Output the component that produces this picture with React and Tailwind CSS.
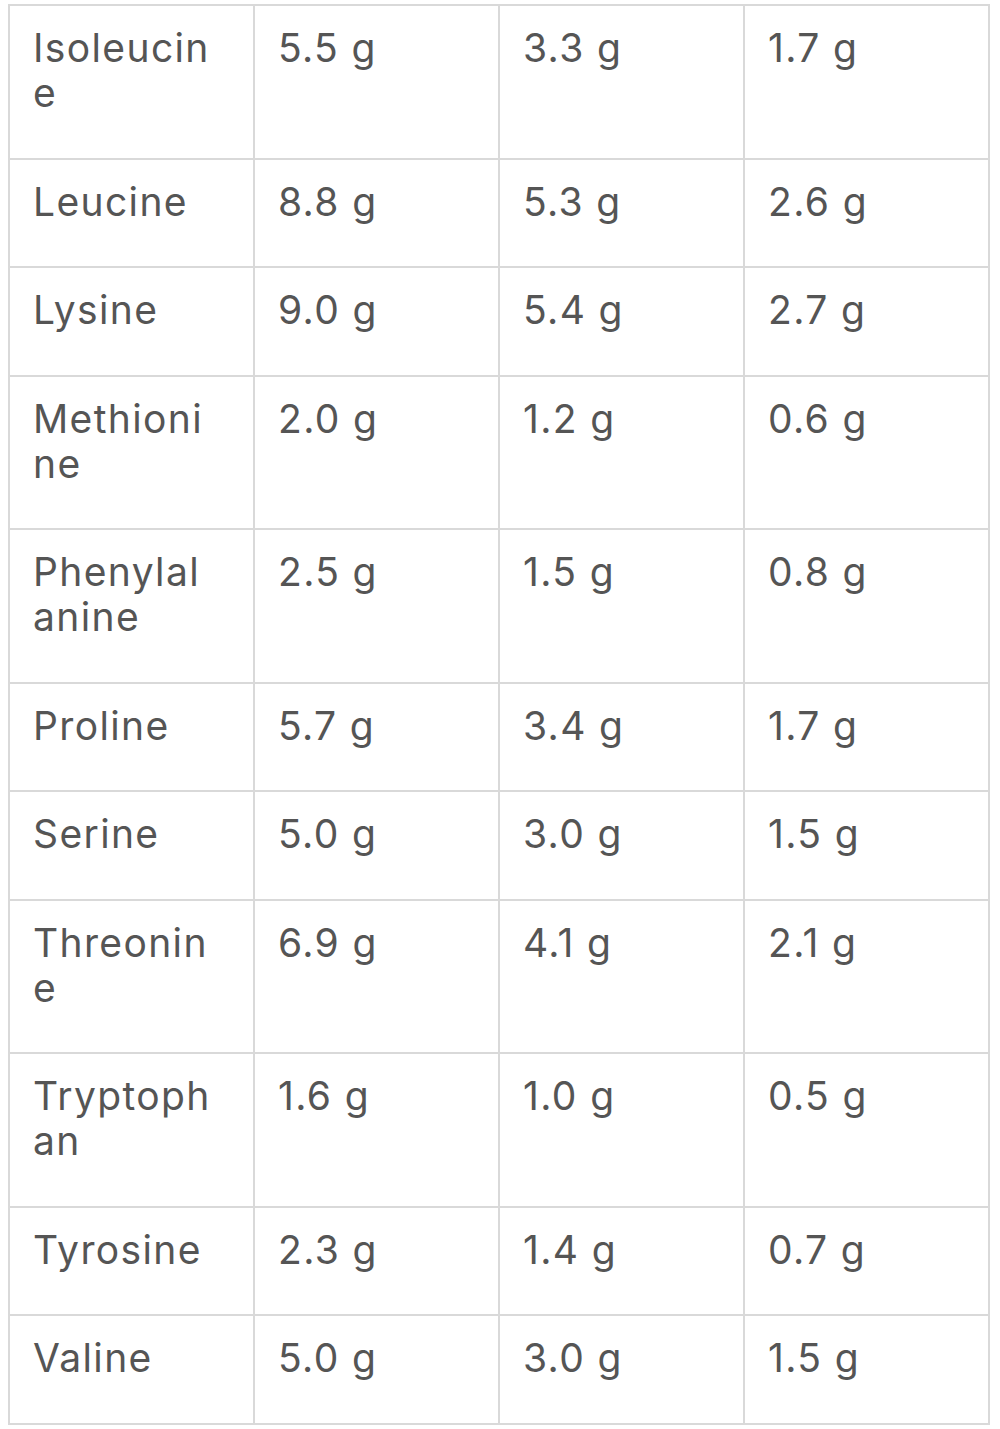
import React from 'react';

const rows = [
  { name: ['Isoleucin', 'e'], values: ['5.5 g', '3.3 g', '1.7 g'] },
  { name: ['Leucine'], values: ['8.8 g', '5.3 g', '2.6 g'] },
  { name: ['Lysine'], values: ['9.0 g', '5.4 g', '2.7 g'] },
  { name: ['Methioni', 'ne'], values: ['2.0 g', '1.2 g', '0.6 g'] },
  { name: ['Phenylal', 'anine'], values: ['2.5 g', '1.5 g', '0.8 g'] },
  { name: ['Proline'], values: ['5.7 g', '3.4 g', '1.7 g'] },
  { name: ['Serine'], values: ['5.0 g', '3.0 g', '1.5 g'] },
  { name: ['Threonin', 'e'], values: ['6.9 g', '4.1 g', '2.1 g'] },
  { name: ['Tryptoph', 'an'], values: ['1.6 g', '1.0 g', '0.5 g'] },
  { name: ['Tyrosine'], values: ['2.3 g', '1.4 g', '0.7 g'] },
  { name: ['Valine'], values: ['5.0 g', '3.0 g', '1.5 g'] },
];

const cell =
  'border-2 border-[#d9d9d9] align-top pl-[23px] pr-3 pt-[19px] pb-[42.5px] text-left font-normal';

export default function App() {
  return (
    <div className="bg-white min-h-[1429px] pt-[4px] pl-[8px]">
      <table
        className="table-fixed border-collapse w-[982px] text-[#555555] text-[39px] leading-[45px] tracking-[0.035em]"
        style={{ fontFamily: 'Inter, Roboto, sans-serif' }}
      >
        <tbody>
          {rows.map((row) => (
            <tr key={row.name.join('')}>
              <td className={cell}>
                {row.name.map((part) => (
                  <span key={part} className="block">
                    {part}
                  </span>
                ))}
              </td>
              {row.values.map((v, i) => (
                <td key={i} className={cell}>
                  {v}
                </td>
              ))}
            </tr>
          ))}
        </tbody>
      </table>
    </div>
  );
}
